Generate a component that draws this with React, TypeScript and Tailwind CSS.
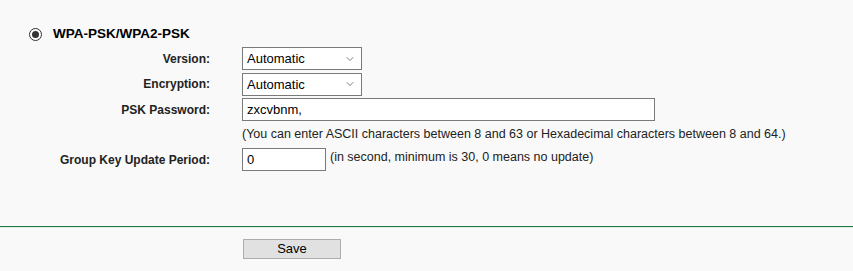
import { ChevronDown } from "lucide-react";

const font = { fontFamily: '"Liberation Sans", Arial, sans-serif' };

function Label({ children }: { children: React.ReactNode }) {
  return (
    <div className="w-[210px] shrink-0 text-right text-[12px] font-bold text-[#222]">
      {children}
    </div>
  );
}

function Select({ value }: { value: string }) {
  return (
    <div className="flex h-[23px] w-[120px] items-center justify-between border border-[#7a7a7a] bg-white pl-[4px] pr-[5px] text-[13px] text-black">
      <span>{value}</span>
      <ChevronDown className="h-[12px] w-[12px] text-[#555]" strokeWidth={1.5} />
    </div>
  );
}

export default function App() {
  return (
    <div className="h-[271px] w-full bg-[#f9f9f9]" style={font}>
      <div className="flex items-center pl-[29px] pt-[24px]">
        <div className="flex h-[13px] w-[13px] items-center justify-center rounded-full border border-[#333] bg-white">
          <div className="h-[7px] w-[7px] rounded-full bg-[#333]" />
        </div>
        <span className="ml-[11px] text-[13.5px] font-bold text-black">WPA-PSK/WPA2-PSK</span>
      </div>

      <div className="mt-[2px] flex flex-col">
        <div className="flex h-[25px] items-center">
          <Label>Version:</Label>
          <div className="ml-[32px]">
            <Select value="Automatic" />
          </div>
        </div>
        <div className="flex h-[26px] items-center">
          <Label>Encryption:</Label>
          <div className="ml-[32px]">
            <Select value="Automatic" />
          </div>
        </div>
        <div className="flex h-[25px] items-center">
          <Label>PSK Password:</Label>
          <div className="ml-[32px] flex h-[23px] w-[413px] items-center border border-[#7a7a7a] bg-white pl-[4px] text-[13px] text-black">
            zxcvbnm,
          </div>
        </div>
        <div className="flex h-[24px] items-center pl-[242px] text-[12.5px] text-[#222]">
          (You can enter ASCII characters between 8 and 63 or Hexadecimal characters between 8 and 64.)
        </div>
        <div className="mt-[1px] flex h-[25px] items-center">
          <Label>Group Key Update Period:</Label>
          <div className="ml-[32px] flex h-[23px] w-[84px] items-center border border-[#7a7a7a] bg-white pl-[4px] text-[13px] text-black">
            0
          </div>
          <span className="ml-[4px] self-start pt-[1px] text-[12.5px] text-[#222]">
            (in second, minimum is 30, 0 means no update)
          </span>
        </div>
      </div>

      <div className="mt-[54px] h-px w-full bg-[#1b7a3e]" />
      <div className="h-px w-full bg-[#e4ece6]" />

      <div className="pl-[243px] pt-[8px]">
        <button className="h-[20px] w-[98px] border border-[#adadad] bg-[#e1e1e1] text-[13px] leading-[18px] text-black">
          Save
        </button>
      </div>
    </div>
  );
}
